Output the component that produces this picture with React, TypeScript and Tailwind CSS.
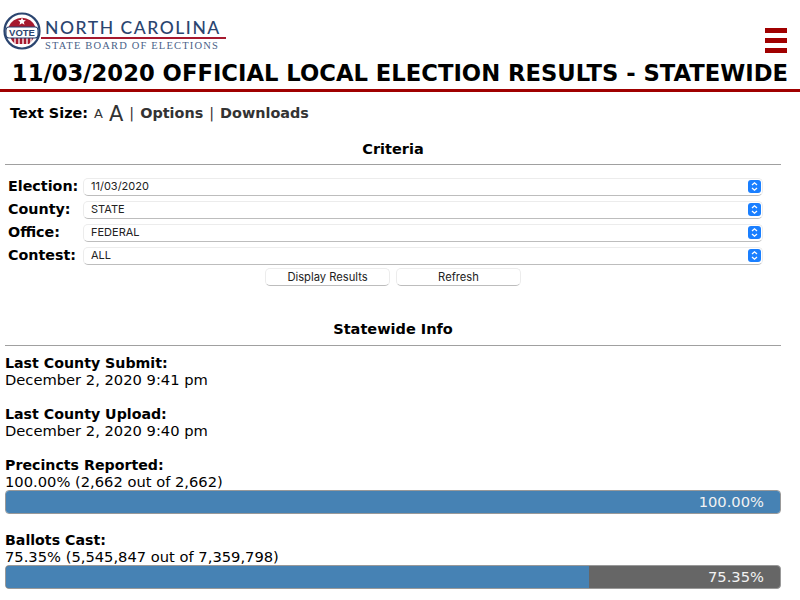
const verdana = "font-['DejaVu_Sans',sans-serif]";

function Seal() {
  return (
    <svg width="38" height="38" viewBox="0 0 38 38" className="shrink-0">
      <circle cx="19" cy="19" r="17.5" fill="#fff" stroke="#2b4570" strokeWidth="2.2" />
      <path d="M5.5 15 A14.5 14.5 0 0 1 32.5 15 Z" fill="#a6192e" />
      <path d="M19 5.5l1.1 2.6 2.8.2-2.1 1.8.7 2.7-2.5-1.5-2.5 1.5.7-2.7-2.1-1.8 2.8-.2z" fill="#fff" />
      <path d="M7.5 26 H30.5 A14.5 14.5 0 0 1 26 32 L12 32 A14.5 14.5 0 0 1 7.5 26 Z" fill="#a6192e" />
      <path d="M12 26v7M16 26v8M20 26v8M24 26v8M28 26v6" stroke="#fff" strokeWidth="1.3" />
      <rect x="3" y="15" width="32" height="11" rx="3" fill="#fff" stroke="#2b4570" strokeWidth="1.1" />
      <text x="19" y="24" textAnchor="middle" fontSize="9.5" fontWeight="700" fill="#2b4570" fontFamily="Liberation Sans, sans-serif">
        VOTE
      </text>
    </svg>
  );
}

function Logo() {
  return (
    <div className="flex items-start">
      <Seal />
      <div className="mt-[8px] flex w-[185px] flex-col">
        <div className="h-[15px] pl-[4px] font-['Lato',sans-serif] text-[17.5px] leading-[15px] font-medium tracking-[1.55px] whitespace-nowrap text-[#2b4570]">
          NORTH CAROLINA
        </div>
        <div className="mt-[2px] h-[2px] bg-[#a6192e]" />
        <div className="mt-[2px] pl-[4px] font-['Liberation_Serif',serif] text-[10.5px] leading-[10px] tracking-[1.17px] whitespace-nowrap text-[#4a5f88]">
          STATE BOARD OF ELECTIONS
        </div>
      </div>
    </div>
  );
}

function SelectRow({ label, value }: { label: string; value: string }) {
  return (
    <div className="flex h-[23px] items-center pl-[8px]">
      <div className="w-[75px] text-[14.3px] font-bold text-black">{label}</div>
      <div className="flex h-[18px] w-[680px] items-center justify-between rounded-[5px] border border-[#ececec] border-b-[#bdbdbd] bg-white pr-[1px] pl-[7px] font-['Inter',sans-serif] text-[11px] text-[#222]">
        <span>{value}</span>
        <span className="flex h-[13px] w-[13px] items-center justify-center rounded-[3px] bg-[#1a7fff]">
          <svg width="9" height="11" viewBox="0 0 9 11" fill="none" stroke="#fff" strokeWidth="1.3">
            <path d="M2 4 L4.5 1.8 L7 4" />
            <path d="M2 7 L4.5 9.2 L7 7" />
          </svg>
        </span>
      </div>
    </div>
  );
}

function Button({ children }: { children: string }) {
  return (
    <button className="h-[18px] w-[125px] rounded-[5px] border border-[#ececec] border-b-[#bdbdbd] bg-white font-['Inter',sans-serif] text-[11.2px] leading-[16px] text-[#222]">
      {children}
    </button>
  );
}

function SectionTitle({ children, tight }: { children: string; tight?: boolean }) {
  return (
    <div className={`mr-[19px] ml-[5px] border-b border-[#a0a0a0] text-center text-[14.5px] leading-[20px] font-bold text-black ${tight ? "pb-[5px]" : "pb-[6px]"}`}>
      {children}
    </div>
  );
}

function Info({ label, value }: { label: string; value: string }) {
  return (
    <div className="text-black">
      <div className="text-[14.2px] leading-[16px] font-bold">{label}</div>
      <div className="text-[14.7px] leading-[17px]">{value}</div>
    </div>
  );
}

function Bar({ pct, label }: { pct: number; label: string }) {
  return (
    <div className="relative mr-[19px] h-[24px] overflow-hidden rounded-[4px] border border-[#999] bg-[#666]">
      <div className="h-full bg-[#4682b4]" style={{ width: `${pct}%` }} />
      <div className="absolute inset-y-0 right-[16px] flex items-center text-[14.7px] text-[#f2f2f2]">{label}</div>
    </div>
  );
}

export default function App() {
  return (
    <div className={`${verdana} h-[600px] w-[800px] overflow-hidden bg-white`}>
      <div className="flex items-start justify-between pt-[12px] pr-[13px] pl-[3px]">
        <Logo />
        <div className="mt-[16px] flex w-[22px] flex-col gap-[5px]">
          <div className="h-[5px] bg-[#a00000]" />
          <div className="h-[5px] bg-[#a00000]" />
          <div className="h-[5px] bg-[#a00000]" />
        </div>
      </div>

      <h1 className="mt-[6px] border-b-[3px] border-[#a00000] pb-[2px] text-center text-[22.7px] leading-[28px] font-bold whitespace-nowrap text-black">
        11/03/2020 OFFICIAL LOCAL ELECTION RESULTS - STATEWIDE
      </h1>

      <div className="mt-[10px] flex h-[24px] items-center pl-[10px] text-[14.4px] font-bold text-[#333]">
        <span className="text-black">Text Size:</span>
        <span className="ml-[6px] text-[13px] font-normal">A</span>
        <span className="ml-[6px] text-[21px] leading-[24px] font-normal">A</span>
        <span className="mx-[6px] font-normal">|</span>
        <span>Options</span>
        <span className="mx-[6px] font-normal">|</span>
        <span>Downloads</span>
      </div>

      <div className="mt-[13px]">
        <SectionTitle tight>Criteria</SectionTitle>
      </div>

      <div className="mt-[10px]">
        <SelectRow label="Election:" value="11/03/2020" />
        <SelectRow label="County:" value="STATE" />
        <SelectRow label="Office:" value="FEDERAL" />
        <SelectRow label="Contest:" value="ALL" />
      </div>

      <div className="mt-[1px] flex justify-start gap-[6px] pl-[265px]">
        <Button>Display Results</Button>
        <Button>Refresh</Button>
      </div>

      <div className="mt-[33px]">
        <SectionTitle>Statewide Info</SectionTitle>
      </div>

      <div className="mt-[9px] flex flex-col pl-[5px]">
        <Info label="Last County Submit:" value="December 2, 2020 9:41 pm" />
        <div className="mt-[18px]">
          <Info label="Last County Upload:" value="December 2, 2020 9:40 pm" />
        </div>
        <div className="mt-[18px]">
          <Info label="Precincts Reported:" value="100.00% (2,662 out of 2,662)" />
          <Bar pct={100} label="100.00%" />
        </div>
        <div className="mt-[18px]">
          <Info label="Ballots Cast:" value="75.35% (5,545,847 out of 7,359,798)" />
          <Bar pct={75.35} label="75.35%" />
        </div>
      </div>
    </div>
  );
}
